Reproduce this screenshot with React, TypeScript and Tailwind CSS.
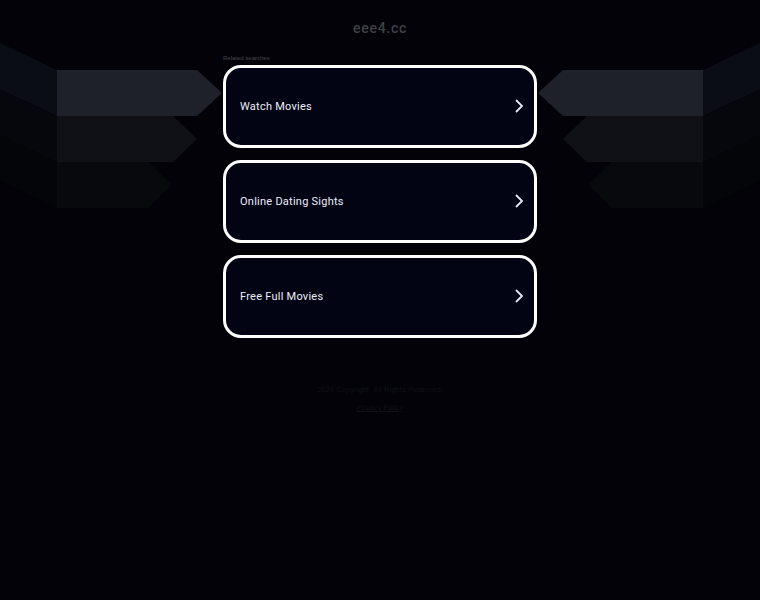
import React from "react";

const items = ["Watch Movies", "Online Dating Sights", "Free Full Movies"];

function Wing({ flip }: { flip?: boolean }) {
  return (
    <g transform={flip ? "translate(760,0) scale(-1,1)" : undefined}>
      <polygon points="0,135 57,162 57,208 0,181" fill="#040509" />
      <polygon points="0,89 57,116 57,162 0,135" fill="#06070c" />
      <polygon points="0,43 57,70 57,116 0,89" fill="#0b0d14" />
      <polygon points="57,70 197,70 222,93 197,116 57,116" fill="#1f212a" />
      <polygon points="57,116 173,116 197,139 173,162 57,162" fill="#0f1117" />
      <polygon points="57,162 148,162 172,185 148,208 57,208" fill="#07090d" />
    </g>
  );
}

export default function App() {
  return (
    <div className="relative h-[600px] w-[760px] overflow-hidden bg-[#020208] font-['Roboto','Liberation_Sans',sans-serif]">
      <svg className="absolute left-0 top-0 h-[600px] w-[760px]" viewBox="0 0 760 600" aria-hidden="true">
        <Wing />
        <Wing flip />
      </svg>
      <div className="relative flex flex-col items-center">
        <h1 className="mt-[19px] h-[18px] text-[14px] leading-[18px] font-medium tracking-[0.75px] text-[#3f4046]">
          eee4.cc
        </h1>
        <div className="mt-[17px] w-[314px]">
          <p className="h-[11px] font-['Liberation_Sans',sans-serif] text-[6px] leading-[9px] text-[#45464f]">Related searches</p>
          <div className="flex flex-col gap-3">
            {items.map((t) => (
              <a
                key={t}
                className="flex h-[83px] items-center justify-between rounded-[18px] border-[3px] border-white bg-[#020414] pl-[14px] pr-[9px] text-[11px] tracking-[0.25px] text-[#eceef8]"
              >
                <span className="pt-[2px]">{t}</span>
                <svg width="12" height="16" viewBox="0 0 12 16" fill="none" stroke="#e6e8f4" strokeWidth="1.8" className="-mt-px">
                  <path d="M3 2 L9 8 L3 14" />
                </svg>
              </a>
            ))}
          </div>
        </div>
        <p className="mt-[47px] font-['Liberation_Sans',sans-serif] text-[7.5px] leading-[10px] tracking-[0.1px] text-[#101116]">2024 Copyright. All Rights Reserved.</p>
        <a className="mt-[8px] font-['Liberation_Sans',sans-serif] text-[7.5px] leading-[10px] text-[#101116] underline">Privacy Policy</a>
      </div>
    </div>
  );
}
